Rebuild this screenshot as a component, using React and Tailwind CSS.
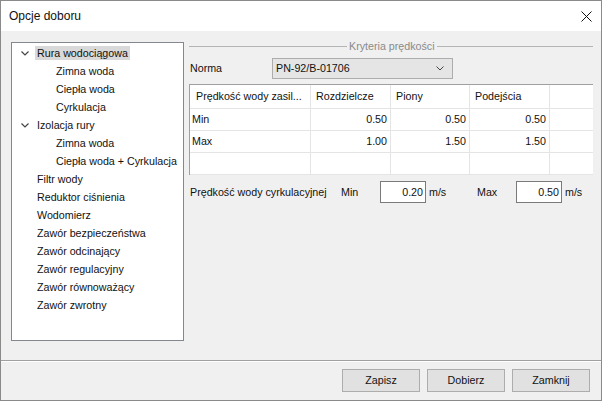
import React from "react";

const treeItems = [
  { label: "Rura wodociągowa", level: 1, open: true, selected: true },
  { label: "Zimna woda", level: 2 },
  { label: "Ciepła woda", level: 2 },
  { label: "Cyrkulacja", level: 2 },
  { label: "Izolacja rury", level: 1, open: true },
  { label: "Zimna woda", level: 2 },
  { label: "Ciepła woda + Cyrkulacja", level: 2 },
  { label: "Filtr wody", level: 1 },
  { label: "Reduktor ciśnienia", level: 1 },
  { label: "Wodomierz", level: 1 },
  { label: "Zawór bezpieczeństwa", level: 1 },
  { label: "Zawór odcinający", level: 1 },
  { label: "Zawór regulacyjny", level: 1 },
  { label: "Zawór równoważący", level: 1 },
  { label: "Zawór zwrotny", level: 1 },
];

const rows = [
  { name: "Min", values: ["0.50", "0.50", "0.50"] },
  { name: "Max", values: ["1.00", "1.50", "1.50"] },
  { name: "", values: ["", "", ""] },
];

function Chevron() {
  return (
    <svg width="8" height="5" viewBox="0 0 8 5" className="ml-[9px]">
      <path d="M0.5 0.5 L4 4 L7.5 0.5" fill="none" stroke="#444" strokeWidth="1.2" />
    </svg>
  );
}

function Cell({ w, children, right, className = "" }) {
  return (
    <div
      className={`${w} h-full shrink-0 border-r border-b border-[#e4e4e4] flex items-center ${
        right ? "justify-end pr-[3px]" : "pl-[5px]"
      } ${className}`}
    >
      {children}
    </div>
  );
}

export default function App() {
  return (
    <div
      className="w-[602px] h-[401px] border border-[#8a8a8a] flex flex-col text-[10.7px] text-[#111]"
      style={{ fontFamily: '"Liberation Sans", Arial, sans-serif' }}
    >
      {/* title bar */}
      <div className="h-[30px] bg-white flex items-center justify-between pl-[8px] pr-[9px]">
        <span className="text-[12px]">Opcje doboru</span>
        <svg width="11" height="11" viewBox="0 0 11 11">
          <path d="M0.5 0.5 L10.5 10.5 M10.5 0.5 L0.5 10.5" stroke="#111" strokeWidth="1" />
        </svg>
      </div>

      <div className="flex-1 bg-[#f0f0f0] flex flex-col">
        <div className="flex pt-[11px] pl-[10px]">
          {/* tree */}
          <div className="w-[173px] h-[299px] border border-[#828790] bg-white pt-[1px]">
            {treeItems.map((it, i) => (
              <div key={i} className="h-[18px] flex items-center">
                <div className={`${it.level === 1 ? "w-[23px]" : "w-[42px]"} shrink-0 flex items-center`}>
                  {it.open && <Chevron />}
                </div>
                <span className={`px-[2px] h-[14px] flex items-center ${it.selected ? "bg-[#d9d9d9]" : ""}`}>
                  {it.label}
                </span>
              </div>
            ))}
          </div>

          {/* right panel */}
          <div className="ml-[5px] w-[404px] flex flex-col">
            <div className="h-[9px] flex items-center">
              <div className="w-[158px] h-px bg-[#b4b4b4]" />
              <span className="px-[2px] text-[#8a8a8a] leading-none">Kryteria prędkości</span>
              <div className="flex-1 h-px bg-[#b4b4b4]" />
            </div>

            <div className="mt-[7px] flex items-center">
              <span className="w-[83px] pl-[1px] shrink-0">Norma</span>
              <div className="w-[181px] h-[21px] bg-[#e5e5e5] border border-[#adadad] flex items-center justify-between pl-[3px] pr-[8px]">
                <span>PN-92/B-01706</span>
                <svg width="8" height="5" viewBox="0 0 8 5">
                  <path d="M0.5 0.5 L4 4 L7.5 0.5" fill="none" stroke="#444" strokeWidth="1" />
                </svg>
              </div>
            </div>

            {/* grid */}
            <div className="mt-[5px] h-[91px] bg-white border-t border-l border-[#a0a0a0] flex flex-col">
              <div className="h-[24px] flex">
                <Cell w="w-[121px]" className="pl-[6px]">Prędkość wody zasil...</Cell>
                <Cell w="w-[80px]">Rozdzielcze</Cell>
                <Cell w="w-[79px]">Piony</Cell>
                <Cell w="w-[80px]">Podejścia</Cell>
                <div className="flex-1 border-b border-[#e4e4e4]" />
              </div>
              {rows.map((r, i) => (
                <div key={i} className="h-[22px] flex">
                  <Cell w="w-[121px]" className="!pl-[2px]">{r.name}</Cell>
                  <Cell w="w-[80px]" right>{r.values[0]}</Cell>
                  <Cell w="w-[79px]" right>{r.values[1]}</Cell>
                  <Cell w="w-[80px]" right>{r.values[2]}</Cell>
                  <div className="flex-1 border-b border-[#e4e4e4]" />
                </div>
              ))}
            </div>

            <div className="mt-[6px] flex items-center">
              <span className="w-[152px] pl-[1px] shrink-0">Prędkość wody cyrkulacyjnej</span>
              <span className="w-[39px] shrink-0">Min</span>
              <div className="w-[46px] h-[22px] bg-white border border-[#7a7a7a] flex items-center justify-end pr-[2px]">
                0.20
              </div>
              <span className="ml-[3px] w-[48px] shrink-0">m/s</span>
              <span className="w-[39px] shrink-0">Max</span>
              <div className="w-[46px] h-[22px] bg-white border border-[#7a7a7a] flex items-center justify-end pr-[2px]">
                0.50
              </div>
              <span className="ml-[3px]">m/s</span>
            </div>
          </div>
        </div>

        <div className="mt-[19px] h-px bg-[#a0a0a0]" />
        <div className="h-px bg-white" />

        <div className="mt-[7px] flex justify-end gap-[7px] pr-[11px]">
          {["Zapisz", "Dobierz", "Zamknij"].map((b) => (
            <button
              key={b}
              type="button"
              className="w-[78px] h-[23px] bg-[#e1e1e1] border border-[#adadad] flex items-center justify-center"
            >
              {b}
            </button>
          ))}
        </div>
      </div>
    </div>
  );
}
